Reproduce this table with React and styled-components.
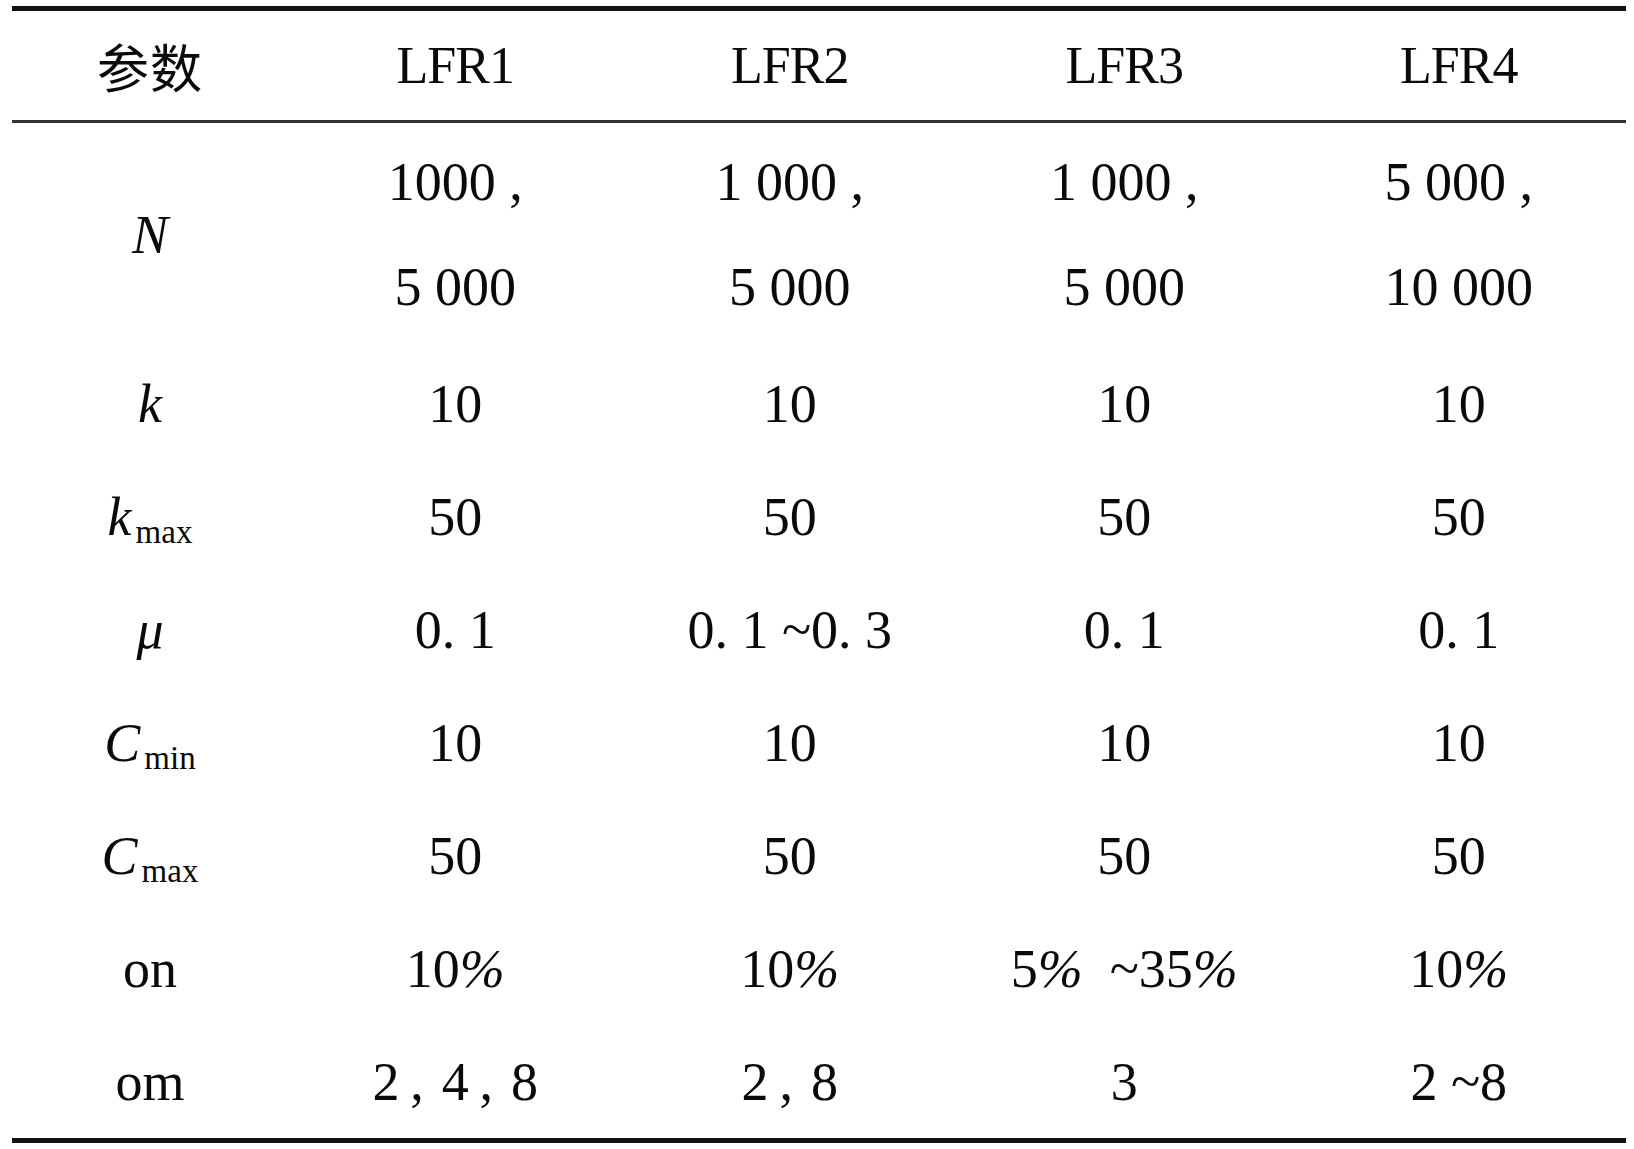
import React from 'react';
import styled, { createGlobalStyle } from 'styled-components';

const GlobalStyle = createGlobalStyle`
  html, body {
    margin: 0;
    padding: 0;
    background: #ffffff;
  }

  body {
    font-family: 'Liberation Serif', 'Times New Roman', serif;
    color: #0a0a0a;
  }
`;

const Table = styled.div`
  width: 1614px;
  margin: 6px 0 0 12px;
  border-top: 5px solid #111111;
  border-bottom: 5px solid #111111;
`;

const Row = styled.div`
  display: grid;
  grid-template-columns: 276px repeat(4, 1fr);
  height: ${props => props.height}px;
  border-bottom: ${props => (props.ruled ? '3px solid #333333' : 'none')};
`;

const Cell = styled.div`
  display: flex;
  flex-direction: column;
  align-items: center;
  justify-content: center;
`;

const Text = styled.span`
  display: inline-block;
  font-size: 54px;
  line-height: ${props => props.lineHeight || 1};
  white-space: pre;
`;

const HeadText = styled(Text)`
  font-size: 52px;
  letter-spacing: -1px;
`;

const CjkText = styled.span`
  font-family: 'Noto Sans CJK SC', 'Noto Sans CJK TC', sans-serif;
  font-size: 52px;
  font-weight: 400;
  line-height: 1;
  letter-spacing: 1px;
`;

const Symbol = styled.span`
  display: inline-flex;
  align-items: baseline;
  font-size: 54px;
  line-height: 1;
`;

const Ital = styled.i`
  font-style: italic;
`;

const Sub = styled.span`
  font-size: 33px;
  font-style: normal;
  margin-left: 4px;
  position: relative;
  top: 8px;
`;

const Pct = styled.i`
  font-style: italic;
`;

const header = ['LFR1', 'LFR2', 'LFR3', 'LFR4'];

const nValues = [
  ['1000 ,', '5 000'],
  ['1 000 ,', '5 000'],
  ['1 000 ,', '5 000'],
  ['5 000 ,', '10 000'],
];

// list commas sit loose between the numbers, as in the typeset original
const gap = '\u2009,\u2004';

const pct = text =>
  text.split('%').map((part, i, arr) => (
    <React.Fragment key={i}>
      {part}
      {i < arr.length - 1 && <Pct>%</Pct>}
    </React.Fragment>
  ));

const rows = [
  {
    label: (
      <Symbol>
        <Ital>k</Ital>
      </Symbol>
    ),
    values: ['10', '10', '10', '10'],
  },
  {
    label: (
      <Symbol>
        <Ital>k</Ital>
        <Sub>max</Sub>
      </Symbol>
    ),
    values: ['50', '50', '50', '50'],
  },
  {
    label: (
      <Symbol>
        <Ital>μ</Ital>
      </Symbol>
    ),
    values: ['0. 1', '0. 1 ~0. 3', '0. 1', '0. 1'],
  },
  {
    label: (
      <Symbol>
        <Ital>C</Ital>
        <Sub>min</Sub>
      </Symbol>
    ),
    values: ['10', '10', '10', '10'],
  },
  {
    label: (
      <Symbol>
        <Ital>C</Ital>
        <Sub>max</Sub>
      </Symbol>
    ),
    values: ['50', '50', '50', '50'],
  },
  {
    label: <Text>on</Text>,
    values: [pct('10%'), pct('10%'), pct('5%  ~35%'), pct('10%')],
  },
  {
    label: <Text>om</Text>,
    values: [`2${gap}4${gap}8`, `2${gap}8`, '3', '2 ~8'],
  },
];

const App = () => {
  return (
    <>
      <GlobalStyle />
      <Table>
        <Row height={109} ruled>
          <Cell>
            <CjkText>参数</CjkText>
          </Cell>
          {header.map(name => (
            <Cell key={name}>
              <HeadText>{name}</HeadText>
            </Cell>
          ))}
        </Row>

        <Row height={224}>
          <Cell>
            <Symbol>
              <Ital>N</Ital>
            </Symbol>
          </Cell>
          {nValues.map((lines, i) => (
            <Cell key={i}>
              {lines.map(line => (
                <Text key={line} lineHeight={1.944}>
                  {line}
                </Text>
              ))}
            </Cell>
          ))}
        </Row>

        {rows.map((row, i) => (
          <Row key={i} height={113}>
            <Cell>{row.label}</Cell>
            {row.values.map((value, j) => (
              <Cell key={j}>
                <Text>{value}</Text>
              </Cell>
            ))}
          </Row>
        ))}
      </Table>
    </>
  );
};

export default App;
